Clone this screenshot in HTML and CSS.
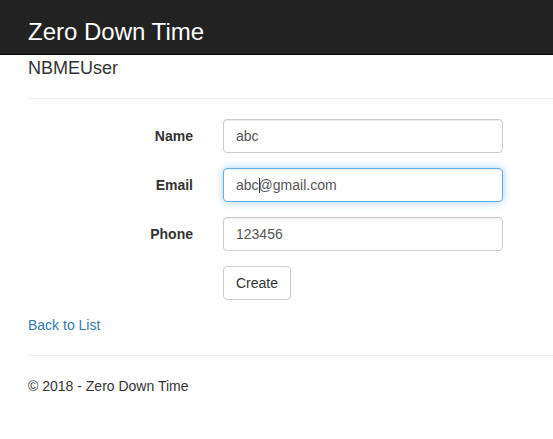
FILE: index.html
```html
<!DOCTYPE html>
<html>
<head>
<meta charset="utf-8">
<title>Create - Zero Down Time</title>
<link rel="stylesheet" href="styles.css">
</head>
<body>
<div class="navbar">
  <a class="brand" href="#">Zero Down Time</a>
</div>
<div class="content">
  <h4 class="title">NBMEUser</h4>
  <hr class="rule">
  <form class="form">
    <label class="label" for="name">Name</label>
    <div class="field"><input class="input" id="name" type="text" value="abc"></div>
    <label class="label" for="email">Email</label>
    <div class="field"><input class="input input-focus" id="email" type="text" value="abc@gmail.com"><span class="caret"></span></div>
    <label class="label" for="phone">Phone</label>
    <div class="field"><input class="input" id="phone" type="text" value="123456"></div>
    <div class="spacer"></div>
    <div class="field"><button class="btn" type="button">Create</button></div>
  </form>
  <div class="back"><a class="link" href="#">Back to List</a></div>
  <hr class="rule">
  <footer class="footer">
    <p class="copy">© 2018 - Zero Down Time</p>
  </footer>
</div>
</body>
</html>
```
FILE: styles.css
```css
* { box-sizing: border-box; }
html, body {
  margin: 0;
  padding: 0;
  background: #fff;
  font-family: "Liberation Sans", Arial, Helvetica, sans-serif;
  font-size: 14px;
  line-height: 20px;
  color: #333;
}
.navbar {
  height: 55px;
  background: #222;
  border-bottom: 1px solid #080808;
  padding: 18px 0 0 28px;
}
.brand {
  display: block;
  color: #fff;
  font-size: 24px;
  line-height: 28px;
  text-decoration: none;
}
.content {
  padding-left: 28px;
}
.title {
  margin: 3px 0 0;
  font-size: 18px;
  line-height: 20px;
  font-weight: 500;
  color: #333;
}
.rule {
  margin: 20px 0;
  border: 0;
  border-top: 1px solid #eee;
  height: 0;
}
.form {
  display: grid;
  grid-template-columns: 165px 280px;
  column-gap: 30px;
  row-gap: 15px;
  margin: 0;
}
.label {
  text-align: right;
  font-weight: bold;
  padding-top: 7px;
  line-height: 20px;
}
.field {
  position: relative;
  height: 34px;
}
.input {
  display: block;
  width: 280px;
  height: 34px;
  padding: 6px 12px;
  font-family: inherit;
  font-size: 14px;
  line-height: 20px;
  color: #555;
  background: #fff;
  border: 1px solid #ccc;
  border-radius: 4px;
  box-shadow: inset 0 1px 1px rgba(0,0,0,.075);
  outline: none;
  margin: 0;
}
.input-focus {
  border-color: #66afe9;
  box-shadow: inset 0 1px 1px rgba(0,0,0,.075), 0 0 8px rgba(102,175,233,.6);
}
.caret {
  position: absolute;
  left: 36px;
  top: 10px;
  width: 1px;
  height: 15px;
  background: #333;
}
.btn {
  display: inline-block;
  height: 34px;
  padding: 6px 12px;
  font-family: inherit;
  font-size: 14px;
  line-height: 20px;
  color: #333;
  background: #fff;
  border: 1px solid #ccc;
  border-radius: 4px;
  margin: 0;
}
.back {
  margin-top: 15px;
  line-height: 20px;
}
.link {
  color: #337ab7;
  text-decoration: none;
}
.footer { margin: 0; }
.copy {
  margin: 0;
  line-height: 20px;
}
```
